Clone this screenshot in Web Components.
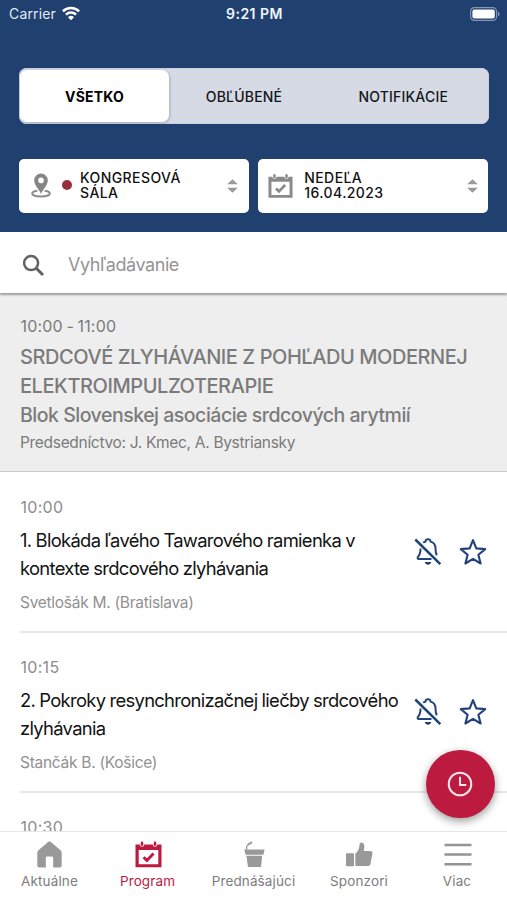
<!DOCTYPE html>
<html lang="sk">
<head>
<meta charset="utf-8">
<title>Program</title>
<style>
html,body{margin:0;height:100%}
body{font-family:Inter,"Liberation Sans",sans-serif;background:#fff;overflow:hidden}
</style>
</head>
<body>
<congress-app></congress-app>
<script>
const define = (name, css, html) => customElements.define(name, class extends HTMLElement {
  constructor() {
    super();
    const t = document.createElement('template');
    t.innerHTML = `<style>*{box-sizing:border-box}svg{display:block;flex:none}${css}</style>${html}`;
    this.attachShadow({mode: 'open'}).append(t.content.cloneNode(true));
  }
});

define('status-bar', `
:host{display:grid;grid-template-columns:1fr auto 1fr;align-items:center;height:28px;padding:0 7px 0 9px;color:#e4eaf4;font-size:14px;letter-spacing:.16px}
.left{display:flex;align-items:center;gap:6px;margin-top:-1px}
.time{font-weight:600;font-size:14px;letter-spacing:.5px;color:#f2f5fa;margin-top:-1px}
.bat{justify-self:end;margin-top:-1px}
`, `
<div class="left"><span>Carrier</span>
<svg width="18" height="15" viewBox="0 0 18 15" fill="none" stroke="#fff" stroke-width="2.5"><path d="M.9 5.3a11.6 11.6 0 0 1 16.2 0"/><path d="M3.9 8.6a7.3 7.3 0 0 1 10.2 0"/><path d="M9 14.2 6 11.2a4.3 4.3 0 0 1 6 0z" fill="#fff" stroke="none"/></svg></div>
<span class="time">9:21 PM</span>
<svg class="bat" width="30" height="14" viewBox="0 0 30 14"><rect x=".6" y=".6" width="26" height="12.8" rx="3.8" fill="none" stroke="#8496b8" stroke-width="1.2"/><rect x="2.4" y="2.4" width="22.4" height="9.2" rx="2" fill="#fff"/><path d="M28 4.7c2 .7 2 3.9 0 4.6z" fill="#8496b8"/></svg>
`);

define('segment-control', `
:host{display:grid;grid-template-columns:149px 150px 1fr;height:56px;margin:0 18.5px 0 19px;padding:2px 1px;border-radius:8px;background:#d5dae4;box-shadow:inset 0 0 0 1px #c9d1df}
`, `<slot></slot>`);

define('segment-item', `
:host{display:flex;align-items:center;justify-content:center;border-radius:7px;color:#14161b;font-size:14px;font-weight:500;letter-spacing:.2px}
:host([selected]){background:#fff;color:#000;font-weight:700;box-shadow:1px 1px 3px #0003}
`, `<slot></slot>`);

define('select-box', `
:host{display:flex;align-items:center;flex:1;height:54px;padding:0 9.5px 0 12px;border-radius:5px;background:#fff;color:#111;font-size:14px;font-weight:500;line-height:15px}
.label{flex:1;white-space:nowrap;padding-bottom:2px}
`, `
<slot name="icon"></slot><div class="label"><slot></slot></div>
<svg width="13" height="16" viewBox="0 0 14 16" fill="#999"><path d="M1.3 6 7 .8 12.7 6zM1.3 10 7 15.2 12.7 10z"/></svg>
`);

define('pin-icon', `:host{display:block;margin-right:11px}`, `
<svg width="20" height="25" viewBox="0 0 20 25"><path d="M6.4 17.8C3.2 18.2 1.200 19.200 1.200 20.600c0 1.700 3.600 3 8.800 3s8.800-1.300 8.800-3c0-1.400-2-2.400-5.200-2.800" fill="none" stroke="#8c8c8c" stroke-width="2"/><path fill="#858585" fill-rule="evenodd" d="M10 21.200C8.900 16.800 3.200 13 3.200 7.200a6.800 6.800 0 0 1 13.600 0c0 5.800-5.700 9.600-6.800 14zM10 10.200a2.800 2.800 0 1 0 0-5.600 2.800 2.800 0 0 0 0 5.600z"/></svg>`);

define('room-dot', `:host{display:block;width:10px;height:10px;border-radius:50%;background:#982e3c;margin-right:8px;margin-top:-1px}`, ``);

define('calendar-icon', `:host{display:block}`, `
<svg width="100%" height="100%" viewBox="0 0 27 27"><path fill="currentColor" fill-rule="evenodd" d="M.5 3.5h4.200a2.300 2.300 0 1 0 4.600 0h8.400a2.300 2.300 0 1 0 4.600 0h4.200v22.800H.5zM3.700 9v14.200h19.600V9z"/><rect x="5.700" y=".6" width="2.600" height="4.400" rx="1.300" fill="currentColor"/><rect x="18.700" y=".6" width="2.600" height="4.400" rx="1.300" fill="currentColor"/><path d="m8.600 16.200 3.300 3.200 6.600-7" fill="none" stroke="currentColor" stroke-width="2.900"/></svg>`);

define('search-field', `
:host{display:flex;align-items:center;gap:23px;height:61px;padding:4px 22px 0;background:#fff;color:#949494;font-size:18px;letter-spacing:-.42px;box-shadow:0 2px 2px #0005;position:relative}
svg{margin-top:1px}
`, `
<svg width="23" height="23" viewBox="0 0 23 23" fill="none" stroke="#636363" stroke-width="2.500"><circle cx="9.100" cy="9.100" r="7"/><path d="m14 14 7 7" stroke-width="3"/></svg><span><slot></slot></span>
`);

define('session-header', `
:host{display:block;height:179px;padding:23px 20px 0;border-bottom:1px solid #c8c8c8;background:#eee;color:#7b7b7b;white-space:nowrap;font-size:15.500px;line-height:20px;letter-spacing:-.31px}
.time{font-size:16px;letter-spacing:.2px;word-spacing:-1.200px;padding-left:.5px}
.title{margin-top:6.500px;font-size:20px;font-weight:500;line-height:29.500px;letter-spacing:-.44px}
.block{margin-top:-.5px;font-size:19.500px;font-weight:500;line-height:29.500px;letter-spacing:-.49px}
.chair{margin-top:2px}
`, `
<div class="time"><slot name="time"></slot></div>
<div class="title"><slot name="title"></slot></div>
<div class="block"><slot name="block"></slot></div>
<div class="chair"><slot></slot></div>
`);

define('talk-item', `
:host{display:flex;align-items:flex-start;height:160px;margin-left:20px;border-bottom:2px solid #e8e8e8;white-space:nowrap;color:#919191}
.text{flex:1;padding-top:24px}
.time{font-size:16px;line-height:20px;letter-spacing:.3px;color:#8d8d8d;padding-left:.5px}
.title{margin-top:8.500px;font-size:18.400px;line-height:28.200px;letter-spacing:-.69px;word-spacing:-.3px;color:#131313}
.by{margin-top:11px;font-size:15.500px;line-height:20px;letter-spacing:-.28px}
.act{display:flex;align-self:center;gap:17px;padding-right:20px}
`, `
<div class="text"><div class="time"><slot name="time"></slot></div><div class="title"><slot></slot></div><div class="by"><slot name="by"></slot></div></div>
<div class="act">
<svg width="28" height="28" viewBox="0 0 28 28" fill="none" stroke="#21427a" stroke-width="2"><path d="M9.200 4.800c.7-.6 1.500-1 2.300-1.200C11.400 2 12.500 1.200 14 1.200s2.600.8 2.500 2.400c3.200.9 5 3.400 5 6.700 0 3 .2 5.100 1.300 6.900M6.600 10.500c-.1 4-.8 6.300-2.500 8.200-1 1.100-.4 2.300.9 2.300h12.500"/><path d="M10.700 24h6.600c-.5 1.900-1.700 2.700-3.300 2.700s-2.800-.8-3.300-2.700z" fill="#21427a" stroke="none"/><path d="M1.300 1.500 26.300 26.200" stroke-width="2.500"/></svg>
<svg width="28" height="28" viewBox="0 0 28 28" fill="none" stroke="#21427a" stroke-width="2.100" stroke-linejoin="round"><path d="m14 2.200 3.300 8.200 8.900.7-6.800 5.700 2.200 8.700L14 20.800l-7.600 4.700 2.200-8.700-6.800-5.700 8.900-.7z"/></svg>
</div>
`);

define('now-button', `
:host{position:absolute;right:12.500px;bottom:82px;display:flex;align-items:center;justify-content:center;width:68.500px;height:68.500px;border-radius:50%;background:#bd1a3f;box-shadow:0 3px 8px #0006}
`, `
<svg width="26" height="26" viewBox="0 0 26 26" fill="none" stroke="#fbe6eb" stroke-width="2"><circle cx="13" cy="13" r="11.300"/><path d="M13 5.800v8.200h6.300"/></svg>
`);

define('tab-bar', `
:host{display:grid;grid-template-columns:99px 97px 115px 96px 100px;position:absolute;left:0;right:0;bottom:0;height:69.500px;border-top:1px solid #e6e6e6;background:#fff}
`, `<slot></slot>`);

define('tab-item', `
:host{display:flex;flex-direction:column;align-items:center;padding-top:9px;color:#7d7d7d;font-size:13.500px;line-height:18px;letter-spacing:.12px;white-space:nowrap}
:host([active]){color:#bd1a3f}
.ico{height:27px;margin-bottom:4px}
`, `<div class="ico"><slot name="icon"></slot></div><slot></slot>`);

define('home-icon', `:host{display:block}`, `<svg width="27" height="27" viewBox="0 0 27 27"><path fill="#999" d="M13.500.6c.8 0 1.400.3 2 .8l9 7.800c.8.7 1.200 1.500 1.200 2.500v12.600c0 1.400-.8 2.200-2.200 2.200h-6.300v-9.600c0-.9-.6-1.500-1.500-1.500h-4.400c-.9 0-1.500.6-1.500 1.500v9.600H3.500c-1.400 0-2.200-.8-2.200-2.200V11.700c0-1 .4-1.800 1.200-2.500l9-7.800c.6-.5 1.200-.8 2-.8z"/></svg>`);
define('lectern-icon', `:host{display:block}`, `<svg width="24" height="27" viewBox="0 0 24 27"><path fill="#999" d="M2.200 8.400h20.400l-1.200 5.300H3.600zM4.400 14.800h15.800L19 26H6z"/><path d="M4.600 8.600C4.300 5.200 5.300 3.700 7 3" fill="none" stroke="#999" stroke-width="1.300"/><path d="m6.500 3.400 2.800-1.800" stroke="#999" stroke-width="2" stroke-linecap="round"/></svg>`);
define('thumb-icon', `:host{display:block}`, `<svg width="28" height="27" viewBox="0 0 28 27" fill="#999"><rect x="1" y="12.200" width="8" height="13" rx=".9"/><path d="M10.300 14c0-1 .3-1.500 1-2.200 1.900-2 3-4.200 3.100-7.500.1-1.900.6-2.900 2-2.900 2.200 0 3.300 2.200 2.900 5.100l-.5 3.500h6.400c1.700 0 2.500 1.100 2.200 2.700l-1.900 10.100c-.3 1.400-1.100 2.200-2.500 2.200H12c-1.100 0-1.700-.6-1.700-1.600z"/></svg>`);
define('menu-icon', `:host{display:block;margin-left:2px}`, `<svg width="28" height="27" viewBox="0 0 28 27" stroke="#949494" stroke-width="2.500"><path d="M.5 4h27M.5 13.600h27M.5 23.200h27"/></svg>`);

define('congress-app', `
:host{display:block;position:relative;width:507px;height:900px;overflow:hidden;background:#fff}
header{height:232px;background:#20416f}
segment-control{margin-top:40px}
.selects{display:flex;gap:9.500px;padding:34.500px 19px 0}
.selects calendar-icon{width:25px;height:26px;color:#8a8a8a;margin:0 11.500px 0 -2.500px}
tab-item calendar-icon{width:27px;height:27px;margin-left:2px}
.a{letter-spacing:.42px}.b{letter-spacing:.42px}
talk-item:first-child{margin-top:1px}
`, `
<header>
<status-bar></status-bar>
<segment-control><segment-item selected>VŠETKO</segment-item><segment-item>OBĽÚBENÉ</segment-item><segment-item>NOTIFIKÁCIE</segment-item></segment-control>
<div class="selects">
<select-box class="a"><pin-icon slot="icon"></pin-icon><room-dot slot="icon"></room-dot>KONGRESOVÁ<br>SÁLA</select-box>
<select-box class="b"><calendar-icon slot="icon"></calendar-icon>NEDEĽA<br>16.04.2023</select-box>
</div>
</header>
<search-field>Vyhľadávanie</search-field>
<session-header><span slot="time">10:00 - 11:00</span><span slot="title">SRDCOVÉ ZLYHÁVANIE Z POHĽADU MODERNEJ<br>ELEKTROIMPULZOTERAPIE</span><span slot="block">Blok Slovenskej asociácie srdcových arytmií</span>Predsedníctvo: J. Kmec, A. Bystriansky</session-header>
<main>
<talk-item><span slot="time">10:00</span>1. Blokáda ľavého Tawarového ramienka v<br>kontexte srdcového zlyhávania<span slot="by">Svetlošák M. (Bratislava)</span></talk-item>
<talk-item><span slot="time">10:15</span>2. Pokroky resynchronizačnej liečby srdcového<br>zlyhávania<span slot="by">Stančák B. (Košice)</span></talk-item>
<talk-item><span slot="time">10:30</span></talk-item>
</main>
<now-button></now-button>
<tab-bar>
<tab-item><home-icon slot="icon"></home-icon>Aktuálne</tab-item>
<tab-item active><calendar-icon slot="icon"></calendar-icon>Program</tab-item>
<tab-item><lectern-icon slot="icon"></lectern-icon>Prednášajúci</tab-item>
<tab-item><thumb-icon slot="icon"></thumb-icon>Sponzori</tab-item>
<tab-item><menu-icon slot="icon"></menu-icon>Viac</tab-item>
</tab-bar>
`);
</script>
</body>
</html>
